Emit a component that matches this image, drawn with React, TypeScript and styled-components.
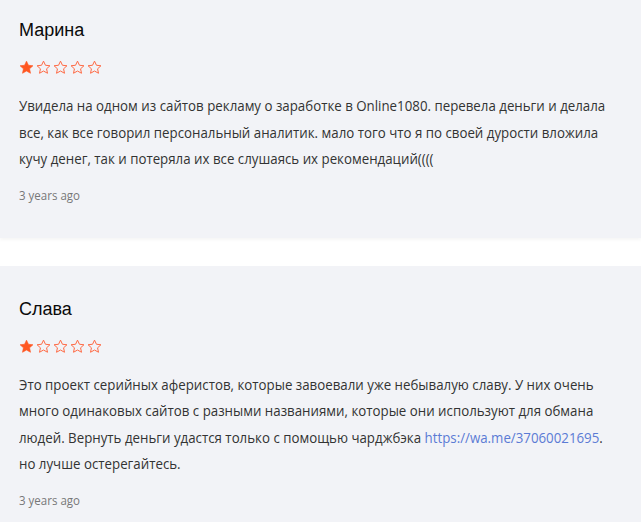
import styled, { createGlobalStyle } from "styled-components";

const SQUEEZE = 0.886;

const Global = createGlobalStyle`
  html, body {
    margin: 0;
    padding: 0;
    background: #fff;
  }
  body {
    font-family: "Open Sans", "Liberation Sans", sans-serif;
    overflow: hidden;
  }
`;

const List = styled.div`
  display: grid;
  gap: 28px;
  margin-top: -13px;
`;

const Card = styled.article`
  background: #f2f3f7;
  padding: 32px 19px 35px;
  box-shadow: 0 2px 3px rgba(0, 0, 0, 0.04);
  overflow: hidden;
`;

const Name = styled.h3`
  margin: 0;
  font-family: "Liberation Sans", Arial, sans-serif;
  font-weight: 400;
  font-size: 18px;
  line-height: 22px;
  color: #0a0a0a;
`;

const Stars = styled.div`
  display: flex;
  gap: 2px;
  margin-top: 19px;
  height: 15px;
`;

/* the site's body font is a narrow cut of Open Sans */
const Text = styled.p`
  margin: 17px 0 0;
  width: calc(100% / ${SQUEEZE});
  transform: scaleX(${SQUEEZE});
  transform-origin: left top;
  font-size: 15px;
  line-height: 26.5px;
  color: #333;
`;

const Link = styled.a`
  color: #5b7bd5;
  text-decoration: none;
`;

const Time = styled.div`
  margin-top: 15px;
  width: calc(100% / ${SQUEEZE});
  transform: scaleX(${SQUEEZE});
  transform-origin: left top;
  font-size: 13px;
  line-height: 16px;
  color: #777;
`;

function Star({ filled }: { filled: boolean }) {
  return (
    <svg width="15" height="15" viewBox="0 0 24 24">
      <path
        d="M12 1.8l3.1 6.6 7.2.8-5.4 4.9 1.5 7.1L12 17.6l-6.4 3.6 1.5-7.1-5.4-4.9 7.2-.8z"
        fill={filled ? "#ff5722" : "none"}
        stroke={filled ? "#ff5722" : "#ff6a45"}
        strokeWidth={filled ? 1 : 1.6}
        strokeLinejoin="round"
      />
    </svg>
  );
}

function Rating({ value }: { value: number }) {
  return (
    <Stars>
      {[1, 2, 3, 4, 5].map((i) => (
        <Star key={i} filled={i <= value} />
      ))}
    </Stars>
  );
}

const reviews = [
  {
    name: "Марина",
    rating: 1,
    text: (
      <>
        Увидела на одном из сайтов рекламу о заработке в Online1080. перевела
        деньги и делала все, как все говорил персональный аналитик. мало того
        что я по своей дурости вложила кучу денег, так и потеряла их все
        слушаясь их рекомендаций((((
      </>
    ),
    time: "3 years ago",
  },
  {
    name: "Слава",
    rating: 1,
    text: (
      <>
        Это проект серийных аферистов, которые завоевали уже небывалую славу. У
        них очень много одинаковых сайтов с разными названиями, которые они
        используют для обмана людей. Вернуть деньги удастся только с помощью
        чарджбэка{" "}
        <Link href="#">https://wa.me/37060021695</Link>. но лучше
        остерегайтесь.
      </>
    ),
    time: "3 years ago",
  },
];

export default function App() {
  return (
    <>
      <Global />
      <List>
        {reviews.map((r) => (
          <Card key={r.name}>
            <Name>{r.name}</Name>
            <Rating value={r.rating} />
            <Text>{r.text}</Text>
            <Time>{r.time}</Time>
          </Card>
        ))}
      </List>
    </>
  );
}
